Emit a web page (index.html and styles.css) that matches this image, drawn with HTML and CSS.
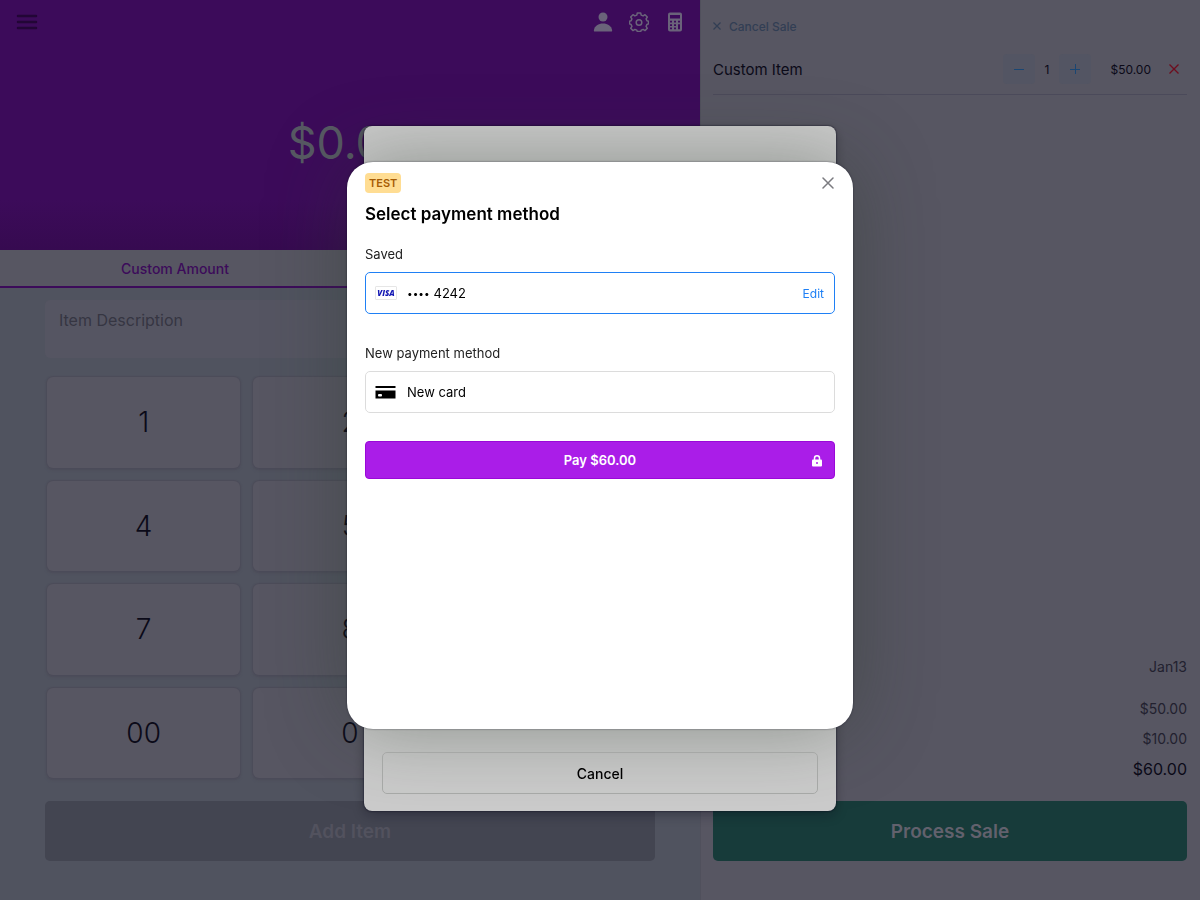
FILE: index.html
```
<!DOCTYPE html>
<html lang="en">
    <head>
        <meta charset="UTF-8" />
        <meta name="viewport" content="width=device-width, initial-scale=1.0" />
        <title>Point of Sale</title>
        <link rel="stylesheet" href="styles.css">
    </head>
    <body>
        <div class="app">
            <main class="register">
                <header class="header">
                    <div class="toolbar">
                        <button class="icon-btn menu" aria-label="Menu">
                            <svg width="22" height="16" viewBox="0 0 22 16" stroke="currentColor" stroke-width="2.500" stroke-linecap="round">
                                <path d="M2 2h18M2 8h18M2 14h18" />
                            </svg>
                        </button>
                        <button class="icon-btn" aria-label="Customer">
                            <svg width="20" height="20" viewBox="0 0 20 20" fill="currentColor">
                                <circle cx="10" cy="5" r="4.5" />
                                <path d="M1.5 19.5C1 19.5.8 19 .9 18.200C1.500 13.800 5.500 11.500 10 11.500s8.500 2.300 9.100 6.700c.1.800-.1 1.300-.6 1.300z" />
                            </svg>
                        </button>
                        <button class="icon-btn" aria-label="Settings">
                            <svg width="20" height="20" viewBox="0 0 20 20" fill="none" stroke="currentColor" stroke-width="1.500" stroke-linejoin="round">
                                <path d="M8.300 1h3.400l.5 2.100 1.900.8 1.900-1.200 2.300 2.300-1.200 1.900.8 1.900 1.600.5v2.600l-1.600.6-.8 1.900 1.200 1.900-2.300 2.300-1.900-1.200-1.900.8-.5 1.300H8.300l-.5-1.300-1.900-.8L4 18.600l-2.300-2.300 1.200-1.900-.8-1.900-1.600-.6V9.300l1.600-.5.8-1.900L1.700 5 4 2.700l1.900 1.200 1.900-.8z" />
                                <circle cx="10" cy="10.500" r="2.800" />
                            </svg>
                        </button>
                        <button class="icon-btn" aria-label="Calculator">
                            <svg width="20" height="20" viewBox="0 0 20 20" fill="currentColor" fill-rule="evenodd">
                                <path d="M5 .5h10a2 2 0 0 1 2 2v15a2 2 0 0 1-2 2H5a2 2 0 0 1-2-2v-15a2 2 0 0 1 2-2zM5 3v3.500h10V3zM5 8.700v1.800h2V8.700zM9 8.700v1.800h2V8.700zM13 8.700v1.800h2V8.700zM5 12.200V14h2v-1.800zM9 12.200V14h2v-1.800zM13 12.200v5h2v-5zM5 15.500v1.800h2v-1.800zM9 15.500v1.800h2v-1.800z" />
                            </svg>
                        </button>
                    </div>
                    <div class="amount">$0.00</div>
                </header>
                <nav class="tabs">
                    <button class="tab">Custom Amount</button>
                </nav>
                <div class="entry">
                    <input type="text" class="description" placeholder="Item Description" aria-label="Item Description" />
                    <div class="keypad">
                        <button class="key">1</button>
                        <button class="key">2</button>
                        <button class="key">3</button>
                        <button class="key">4</button>
                        <button class="key">5</button>
                        <button class="key">6</button>
                        <button class="key">7</button>
                        <button class="key">8</button>
                        <button class="key">9</button>
                        <button class="key">00</button>
                        <button class="key">0</button>
                        <button class="key">C</button>
                    </div>
                    <button class="big-btn add-item">Add Item</button>
                </div>
            </main>
            <aside class="cart">
                <button class="cancel-sale">
                    <svg width="8" height="8" viewBox="0 0 8 8" stroke="currentColor" stroke-width="1.200">
                        <path d="M.5.5l7 7M7.500.5l-7 7" />
                    </svg>
                    Cancel Sale
                </button>
                <div class="cart-row">
                    <span class="item-name">Custom Item</span>
                    <button class="qty-btn" aria-label="Decrease">
                        <svg width="10" height="10" viewBox="0 0 10 10" stroke="currentColor"><path d="M0 5.500h10" /></svg>
                    </button>
                    <span class="qty">1</span>
                    <button class="qty-btn" aria-label="Increase">
                        <svg width="10" height="10" viewBox="0 0 10 10" stroke="currentColor"><path d="M0 5.500h10M5.500 0v10" /></svg>
                    </button>
                    <span class="price">$50.00</span>
                    <button class="remove" aria-label="Remove">
                        <svg width="10" height="10" viewBox="0 0 10 10" stroke="currentColor" stroke-width="1.300"><path d="M.5.5l9 9M9.500.5l-9 9" /></svg>
                    </button>
                </div>
                <div class="totals">
                    <div class="date">Jan13</div>
                    <div>$50.00</div>
                    <div>$10.00</div>
                    <div class="total">$60.00</div>
                </div>
                <button class="big-btn process">Process Sale</button>
            </aside>
        </div>

        <div class="overlay">
            <div class="sheet">
                <form class="payment">
                    <div class="payment-top">
                        <span class="badge">TEST</span>
                        <button type="button" class="close" aria-label="Close">
                            <svg width="12" height="12" viewBox="0 0 12 12" stroke="currentColor" stroke-width="1.500" stroke-linecap="round">
                                <path d="M1 1l10 10M11 1L1 11" />
                            </svg>
                        </button>
                    </div>
                    <h1 class="title">Select payment method</h1>
                    <h2 class="label">Saved</h2>
                    <div class="option selected">
                        <input type="radio" name="method" id="saved-card" checked />
                        <label for="saved-card">
                            <span class="visa">VISA</span>
                            <span class="dots">••••</span>
                            4242
                        </label>
                        <button type="button" class="edit">Edit</button>
                    </div>
                    <h2 class="label">New payment method</h2>
                    <div class="option">
                        <input type="radio" name="method" id="new-card" />
                        <label for="new-card">
                            <svg class="card" width="21" height="14" viewBox="0 0 21 14">
                                <path d="M.5 1h20v2H.5zM.5 5.500h20v8H.5z" />
                                <rect x="3" y="9" width="4" height="2.500" rx="1" fill="#fff" />
                            </svg>
                            New card
                        </label>
                    </div>
                    <button type="button" class="pay">
                        Pay $60.00
                        <svg class="lock" width="10" height="12" viewBox="0 0 10 12">
                            <path d="M2.500 5V3.300a2.500 2.500 0 0 1 5 0V5" fill="none" stroke="#fff" stroke-width="1.500" />
                            <rect x="0" y="4.500" width="10" height="7" rx="1" fill="#fff" />
                            <circle cx="5" cy="8" r="1" fill="#aa1de8" />
                        </svg>
                    </button>
                </form>
                <button class="cancel">Cancel</button>
            </div>
        </div>
    </body>
</html>
```
FILE: styles.css
```
* {
    box-sizing: border-box;
}
body {
    margin: 0;
    font-family: Inter, "Liberation Sans", sans-serif;
    font-size: 13px;
    color: #0b0a18;
}
button {
    padding: 0;
    border: none;
    background: none;
    font-family: inherit;
    color: inherit;
    cursor: pointer;
}
svg {
    display: block;
}
.app {
    display: grid;
    grid-template-columns: 7fr 5fr;
    min-height: 100vh;
}

/* left side */
.register {
    display: flex;
    flex-direction: column;
    background-color: #50535f;
}
.header {
    height: 250px;
    background: linear-gradient(#3c0b5a 80%, #360a50);
    color: #6a637a;
}
.toolbar {
    display: flex;
    align-items: center;
    gap: 16px;
    height: 43px;
    padding: 0 15px 0 16px;
}
.menu {
    margin-right: auto;
    color: #220636;
}
.amount {
    margin-top: 70px;
    line-height: 60px;
    text-align: center;
    font-size: 45px;
    font-weight: 400;
    color: #575963;
}
.tabs {
    display: flex;
    background-color: #575662;
}
.tab {
    flex: 0 0 50%;
    height: 38px;
    border-bottom: 2px solid #3c0b5a;
    font-size: 14px;
    font-weight: 500;
    color: #3c0b5a;
}
.entry {
    flex: 1;
    display: flex;
    flex-direction: column;
    padding: 12px 45px 39px;
}
.description {
    height: 58px;
    padding: 0 14px 18px;
    border: none;
    border-radius: 5px;
    background-color: #555562;
    font-family: inherit;
    font-size: 16px;
    outline: none;
}
.description::placeholder {
    color: #363642;
}
.keypad {
    flex: 1;
    display: grid;
    grid-template-columns: repeat(3, 1fr);
    gap: 13px;
    padding: 19px 2px 23px;
}
.key {
    border-radius: 6px;
    background-color: #575662;
    box-shadow: 0 0 1px 1px #4c4c59, 0 2px 3px #4c4c59;
    font-size: 28px;
    font-weight: 300;
}
.big-btn {
    height: 60px;
    border-radius: 5px;
    font-size: 19px;
    font-weight: 600;
}
.add-item {
    background-color: #434551;
    color: #52525e;
}

/* right side */
.cart {
    display: flex;
    flex-direction: column;
    padding: 18px 13px 39px;
    background-color: #575662;
    box-shadow: inset 1px 0 #50505c;
}
.cancel-sale {
    align-self: flex-start;
    display: flex;
    align-items: center;
    gap: 8px;
    height: 16px;
    font-size: 12px;
    font-weight: 500;
    color: #323e54;
}
.cart-row {
    display: flex;
    align-items: center;
    height: 51px;
    margin-top: 10px;
    border-bottom: 1px solid #4b4a5a;
}
.item-name {
    flex: 1;
    font-size: 15px;
}
.qty-btn {
    display: flex;
    align-items: center;
    justify-content: center;
    width: 32px;
    height: 30px;
    border-radius: 4px;
    background-color: #535563;
    color: #1a4673;
}
.qty {
    width: 24px;
    text-align: center;
    font-size: 12px;
}
.price {
    width: 60px;
    text-align: right;
    font-size: 12px;
}
.remove {
    margin: 0 8px 0 18px;
    color: #6e0d1e;
}
.totals {
    display: flex;
    flex-direction: column;
    gap: 10px;
    margin-top: auto;
    padding-bottom: 22px;
    text-align: right;
    font-size: 14px;
    line-height: 20px;
    color: #22212f;
}
.date {
    margin-bottom: 12px;
}
.total {
    font-size: 16px;
    color: #0b0a18;
}
.process {
    background-color: #173b3a;
    color: #62616d;
}

/* dialogs */
.overlay {
    position: fixed;
    top: 0;
    left: 0;
    width: 100%;
    height: 100vh;
    padding-top: 14vh;
    display: flex;
    justify-content: center;
    align-items: flex-start;
}
.sheet {
    display: flex;
    flex-direction: column;
    width: 472px;
    padding: 36px 18px 17px;
    border-radius: 8px;
    background-color: #cbcbcb;
    box-shadow: 0 0 2px #0a0a1c, 0 4px 12px rgba(10, 10, 28, 0.3);
    color: #000;
}
.payment {
    display: flex;
    flex-direction: column;
    min-height: 63vh;
    margin: 0 -35px 23px;
    padding: 11px 18px;
    border-radius: 26px;
    background-color: #fff;
    box-shadow: 0 0 2px rgba(10, 10, 28, 0.6), 0 0 80px rgba(40, 55, 40, 0.4);
}
.payment-top {
    display: flex;
    align-items: center;
    justify-content: space-between;
}
.badge {
    padding: 0 4px;
    border-radius: 4px;
    background-color: #ffdd93;
    font-size: 11px;
    line-height: 20px;
    font-weight: 600;
    color: #a65c04;
}
.close {
    padding: 0 1px;
    color: #7b7b80;
}
.title {
    margin: 9px 0 20px;
    font-size: 17px;
    line-height: 24px;
    font-weight: 600;
}
.label {
    margin: 0 0 10px;
    font-size: 13px;
    line-height: 16px;
    font-weight: 400;
    color: #222;
}
.option {
    position: relative;
    display: flex;
    align-items: center;
    height: 42px;
    margin-bottom: 31px;
    padding: 0 10px 0 9px;
    border: 1px solid #dcdcdc;
    border-radius: 5px;
}
.option.selected {
    border-color: #1f80f5;
}
.option input {
    position: absolute;
    opacity: 0;
}
.option label {
    flex: 1;
    display: flex;
    align-items: center;
    cursor: pointer;
}
.visa {
    width: 22px;
    margin-right: 10px;
    border: 1px solid #e6e6e6;
    border-radius: 1px;
    text-align: center;
    font-family: "Open Sans", sans-serif;
    font-size: 8px;
    line-height: 12px;
    font-weight: 800;
    font-style: italic;
    color: #1418b4;
}
.dots {
    margin-right: 4px;
    font-size: 10px;
}
.edit {
    font-size: 12px;
    color: #1f80f5;
}
.card {
    margin-right: 11px;
}
.pay {
    position: relative;
    height: 38px;
    margin-top: -3px;
    border: 1px solid #9a08d8;
    border-radius: 4px;
    background-color: #aa1de8;
    font-size: 13px;
    font-weight: 600;
    color: #fff;
}
.lock {
    position: absolute;
    right: 12px;
    top: 13px;
}
.cancel {
    height: 42px;
    border: 1px solid #a6a8a6;
    border-radius: 5px;
    font-size: 14px;
    font-weight: 500;
}
```
